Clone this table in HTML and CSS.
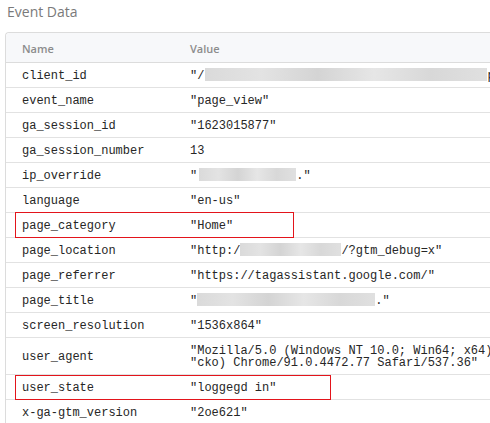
FILE: index.html
```html
<!DOCTYPE html>
<html>
<head>
<meta charset="utf-8">
<link rel="stylesheet" href="styles.css">
</head>
<body>
<div class="page">
  <h2 class="title">Event Data</h2>
  <div class="card">
    <div class="row head">
      <div class="cell name">Name</div>
      <div class="cell value">Value</div>
    </div>
    <div class="row"><div class="cell name">client_id</div><div class="cell value">"/<span class="redact r-client"></span>p</div></div>
    <div class="row"><div class="cell name">event_name</div><div class="cell value">"page_view"</div></div>
    <div class="row"><div class="cell name">ga_session_id</div><div class="cell value">"1623015877"</div></div>
    <div class="row"><div class="cell name">ga_session_number</div><div class="cell value">13</div></div>
    <div class="row"><div class="cell name">ip_override</div><div class="cell value">"<span class="redact r-ip"></span>."</div></div>
    <div class="row"><div class="cell name">language</div><div class="cell value">"en-us"</div></div>
    <div class="row hl-row"><div class="cell name">page_category</div><div class="cell value">"Home"</div><span class="highlight hl-cat"></span></div>
    <div class="row"><div class="cell name">page_location</div><div class="cell value">"http:/<span class="redact r-loc"></span>/?gtm_debug=x"</div></div>
    <div class="row"><div class="cell name">page_referrer</div><div class="cell value">"https://tagassistant.google.com/"</div></div>
    <div class="row"><div class="cell name">page_title</div><div class="cell value">"<span class="redact r-title"></span>."</div></div>
    <div class="row"><div class="cell name">screen_resolution</div><div class="cell value">"1536x864"</div></div>
    <div class="row tall"><div class="cell name">user_agent</div><div class="cell value multi">"Mozilla/5.0 (Windows NT 10.0; Win64; x64)
"cko) Chrome/91.0.4472.77 Safari/537.36"</div></div>
    <div class="row hl-row"><div class="cell name">user_state</div><div class="cell value">"loggegd in"</div><span class="highlight hl-state"></span></div>
    <div class="row"><div class="cell name">x-ga-gtm_version</div><div class="cell value">"2oe621"</div></div>
  </div>
</div>
</body>
</html>
```

FILE: styles.css
```css
html, body {
  margin: 0;
  padding: 0;
  background: #ffffff;
  overflow: hidden;
}

.page {
  width: 490px;
  height: 423px;
  overflow: hidden;
}

.title {
  margin: 0;
  height: 32px;
  padding: 2px 0 0 7px;
  box-sizing: border-box;
  font-family: "Open Sans", "Noto Sans", sans-serif;
  font-weight: 400;
  font-size: 14px;
  line-height: 20px;
  color: #7a7a7a;
}

.card {
  margin-left: 5px;
  width: 620px;
  border: 1px solid #dcdcdc;
  border-right: none;
  border-radius: 4px 0 0 0;
  background: #fff;
}

.row {
  display: flex;
  align-items: center;
  height: 24px;
  border-bottom: 1px solid #e2e2e2;
  font-family: "Liberation Mono", "DejaVu Sans Mono", monospace;
  font-size: 12px;
  color: #262626;
  white-space: pre;
}

.row .cell {
  padding-top: 1px;
}

.row.head {
  height: 29px;
  background: #f7f8fa;
  border-bottom: 1px solid #dcdcdc;
  border-radius: 4px 0 0 0;
  font-family: "Open Sans", "Noto Sans", sans-serif;
  font-weight: 600;
  font-size: 11px;
  color: #8c8c8c;
}

.row.tall {
  height: 36px;
}

.hl-row {
  position: relative;
}

.cell.name {
  width: 168px;
  padding-left: 16px;
  flex: none;
}

.cell.value {
  flex: 1;
  padding-left: 0;
}

.row .multi {
  line-height: 12.5px;
  padding-top: 2px;
}

.redact {
  display: inline-block;
  height: 13px;
  vertical-align: -2px;
  background: linear-gradient(90deg, #dadada 0%, #e3e3e3 20%, #d4d4d4 40%, #e6e6e6 60%, #d8d8d8 80%, #e0e0e0 100%);
  filter: blur(0.6px);
}

.r-client { width: 282px; margin-left: 1px; }
.r-ip { width: 97px; margin-left: 2px; }
.r-loc { width: 101px; margin-left: 0; }
.r-title { width: 178px; margin-left: 0; }

.highlight {
  position: absolute;
  left: 9px;
  border: 1px solid #e3141b;
  box-sizing: border-box;
}

.hl-cat { width: 279px; top: -1px; height: 26px; }
.hl-state { width: 316px; top: 0; height: 25px; }
```
